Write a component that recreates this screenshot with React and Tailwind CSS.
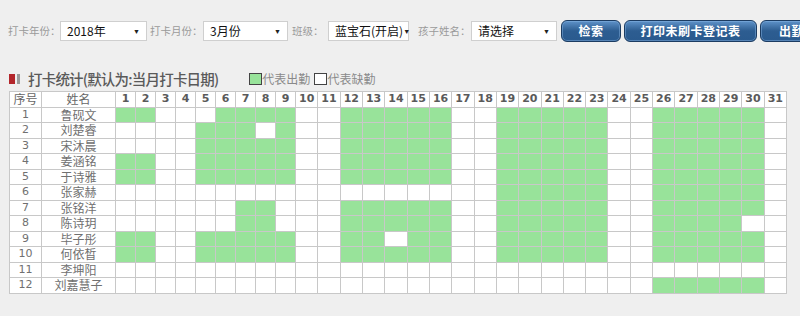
import React from "react";

const range = (a, b) => Array.from({ length: b - a + 1 }, (_, i) => a + i);
const STD = [...range(12, 16), ...range(19, 23), ...range(26, 30)];

const rows = [
  ["鲁砚文", [1, 2, 6, 7, 8, 9, ...STD]],
  ["刘楚睿", [5, 6, 7, 9, ...STD]],
  ["宋沐晨", [5, 6, 7, 8, 9, ...STD]],
  ["姜涵铭", [1, 2, 5, 6, 7, 8, 9, ...STD]],
  ["于诗雅", [1, 2, 5, 6, 7, 8, 9, ...STD]],
  ["张家赫", [...range(19, 23), ...range(26, 30)]],
  ["张铭洋", [7, 8, ...STD]],
  ["陈诗玥", [7, 8, ...range(12, 16), ...range(19, 23), ...range(26, 29)]],
  ["毕子彤", [1, 2, ...range(5, 9), 12, 13, 15, 16, ...range(19, 23), ...range(26, 30)]],
  ["何依晳", [1, 2, ...range(5, 9), ...STD]],
  ["李坤阳", []],
  ["刘嘉慧子", range(26, 30)],
];

const days = range(1, 31);

const cjk = { fontFamily: '"Noto Sans CJK SC", "Noto Sans", sans-serif' };
const num = { fontFamily: '"DejaVu Sans", "Noto Sans CJK SC", sans-serif' };

function Label({ children, className = "" }) {
  return (
    <span className={"shrink-0 text-[10.5px] text-[#9a9a9a] whitespace-nowrap " + className} style={cjk}>
      {children}
    </span>
  );
}

function Select({ value, w }) {
  return (
    <div
      className={
        "shrink-0 h-[20px] bg-white border border-[#cfcfcf] flex items-center justify-between pl-[6px] pr-[6px] " + w
      }
    >
      <span className="text-[12px] text-[#111] leading-none whitespace-nowrap" style={cjk}>
        {value}
      </span>
      <span className="text-[7px] text-[#222] leading-none">▼</span>
    </div>
  );
}

function Btn({ children, w }) {
  return (
    <div
      className={
        "h-[22px] rounded-[6px] border border-[#1c3c62] bg-gradient-to-b from-[#5f93c9] via-[#2d5d91] to-[#2a5a8e] shadow-[inset_0_0_0_1px_rgba(140,185,230,0.45)] flex items-center justify-center shrink-0 " +
        w
      }
    >
      <span className="text-white text-[12px] font-bold tracking-[0.5px] whitespace-nowrap" style={cjk}>
        {children}
      </span>
    </div>
  );
}

export default function App() {
  return (
    <div className="w-[800px] h-[316px] overflow-hidden bg-[#efefef]">
      {/* filter bar */}
      <div className="flex items-center pl-[8px] pt-[20px] h-[42px] w-[900px]">
        <Label className="w-[52px]">打卡年份：</Label>
        <Select value="2018年" w="w-[87px]" />
        <Label className="w-[53px] ml-[3px]">打卡月份：</Label>
        <Select value="3月份" w="w-[85px]" />
        <Label className="w-[36px] ml-[4px]">班级：</Label>
        <Select value="蓝宝石(开启)" w="w-[81px]" />
        <Label className="w-[53px] ml-[9px]">孩子姓名：</Label>
        <Select value="请选择" w="w-[86px]" />
        <div className="ml-[4px] flex gap-[3px] shrink-0">
          <Btn w="w-[60px]">检索</Btn>
          <Btn w="w-[133px]">打印未刷卡登记表</Btn>
          <Btn w="w-[90px] justify-start pl-[18px]">出勤统计</Btn>
        </div>
      </div>

      {/* title + legend */}
      <div className="flex items-center pl-[9px] mt-[29px] h-[16px]">
        <span className="w-[6px] h-[10px] bg-[#b3262b]" />
        <span className="w-[3px] h-[10px] bg-[#9a9a9a] ml-[2px]" />
        <span
          className="ml-[8px] text-[14.5px] font-medium text-[#5a5a5a] tracking-[-0.8px] whitespace-nowrap leading-none"
          style={cjk}
        >
          打卡统计(默认为:当月打卡日期)
        </span>
        <span className="ml-[31px] w-[13px] h-[12px] bg-[#98e39a] border border-[#444]" />
        <span className="text-[12px] text-[#8a8a8a] leading-none" style={cjk}>代表出勤</span>
        <span className="ml-[4px] w-[13px] h-[12px] bg-white border border-[#444]" />
        <span className="text-[12px] text-[#8a8a8a] leading-none" style={cjk}>代表缺勤</span>
      </div>

      {/* table */}
      <div className="pl-[9px] mt-[4px]">
        <div className="w-[778px] grid grid-cols-[31px_73px_repeat(9,19px)_repeat(22,1fr)] auto-rows-[14.5px] gap-px p-px bg-[#c8c8c8]">
          <div className="bg-white flex items-center justify-center text-[12px] text-[#666]" style={cjk}>序号</div>
          <div className="bg-white flex items-center justify-center text-[12px] text-[#666]" style={cjk}>姓名</div>
          {days.map((d) => (
            <div
              key={d}
              className="bg-white flex items-center justify-center text-[11px] font-bold text-[#5a5a5a]"
              style={num}
            >
              {d}
            </div>
          ))}
          {rows.map(([name, present], i) => (
            <React.Fragment key={name}>
              <div className="bg-white flex items-center justify-center text-[11px] text-[#707070]" style={num}>
                {i + 1}
              </div>
              <div className="bg-white flex items-center justify-center text-[12px] text-[#707070]" style={cjk}>
                {name}
              </div>
              {days.map((d) => (
                <div key={d} className={present.includes(d) ? "bg-[#98e39a]" : "bg-white"} />
              ))}
            </React.Fragment>
          ))}
        </div>
      </div>
    </div>
  );
}
